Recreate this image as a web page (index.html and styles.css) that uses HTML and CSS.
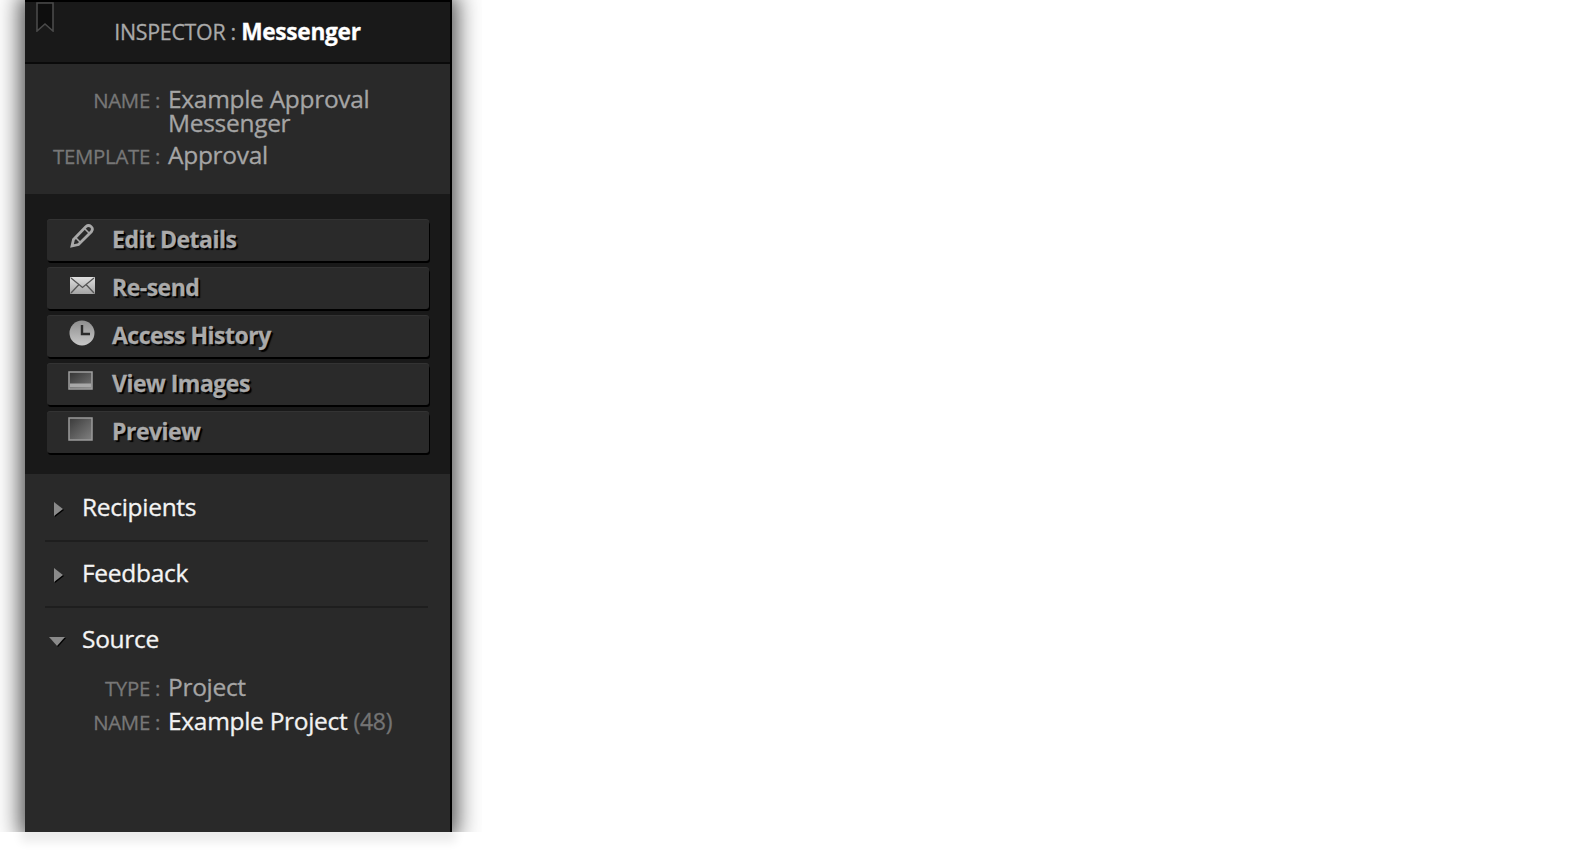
FILE: index.html
```html
<!DOCTYPE html>
<html lang="en">
<head>
<meta charset="utf-8">
<title>Inspector : Messenger</title>
<link rel="stylesheet" href="styles.css">
</head>
<body>
<div class="shell">
<aside class="panel">
  <header class="head">
    <svg class="bookmark" viewBox="0 0 18 30" width="18" height="30"><path d="M1 1H17V29L9 22L1 29Z" fill="#0e0e0e" stroke="#4a4a4a" stroke-width="1.6"/></svg>
    <span class="head-label">INSPECTOR :</span> <strong class="head-title">Messenger</strong>
  </header>
  <section class="info">
    <div class="row"><span class="key">NAME :</span><span class="val val-tight">Example Approval Messenger</span></div>
    <div class="row"><span class="key">TEMPLATE :</span><span class="val">Approval</span></div>
  </section>
  <section class="actions">
    <a class="btn"><svg class="ico ico-up" viewBox="0 0 26 26" width="26" height="26"><g fill="none" stroke="#a8a8a8"><path d="M4.500 17.500L17 4.500Q19.500 2.500 22 4.500T22.500 9.500L9.500 22.500L3 24Z" stroke-width="2.800"/><path d="M7 16L11 20M16 7L20 11" stroke-width="1.600"/></g></svg><span>Edit Details</span></a>
    <a class="btn"><svg class="ico" viewBox="0 0 26 26" width="26" height="26"><defs><linearGradient id="g0" x1="0" y1="0" x2="0" y2="1"><stop offset="0" stop-color="#e0e0e0"/><stop offset="1" stop-color="#a4a4a4"/></linearGradient></defs><rect x="1" y="5" width="25" height="17" rx="1" fill="url(#g0)"/><path d="M2 6L13.500 15.500L25 6M2 21L10 12.500M25 21L17 12.500" fill="none" stroke="#555" stroke-width="1.300"/></svg><span>Re-send</span></a>
    <a class="btn"><svg class="ico" viewBox="0 0 26 26" width="26" height="26"><defs><linearGradient id="g3" x1="0" y1="0" x2="0" y2="1"><stop offset="0" stop-color="#8e8e8e"/><stop offset="1" stop-color="#c8c8c8"/></linearGradient></defs><circle cx="13" cy="13" r="12.500" fill="url(#g3)"/><path d="M13 5V14H21" fill="none" stroke="#2a2a2a" stroke-width="2.400"/></svg><span>Access History</span></a>
    <a class="btn"><svg class="ico ico-l" viewBox="0 0 26 26" width="26" height="26"><defs><linearGradient id="g1" x1="0" y1="0" x2="1" y2="1"><stop offset="0" stop-color="#333"/><stop offset="1" stop-color="#777"/></linearGradient></defs><rect x="1" y="4" width="23" height="17" fill="url(#g1)" stroke="#a0a0a0" stroke-width="1.500"/><rect x="2" y="15.500" width="21" height="4" fill="#a8a8a8"/></svg><span>View Images</span></a>
    <a class="btn"><svg class="ico ico-l" viewBox="0 0 26 26" width="26" height="26"><defs><linearGradient id="g2" x1="0" y1="0" x2="1" y2="1"><stop offset="0" stop-color="#3a3a3a"/><stop offset="1" stop-color="#808080"/></linearGradient></defs><rect x="1" y="2" width="23" height="22" fill="url(#g2)" stroke="#9a9a9a" stroke-width="1.500"/></svg><span>Preview</span></a>
  </section>
  <section class="lists">
    <div class="item"><i class="tri"></i>Recipients</div>
    <div class="item"><i class="tri"></i>Feedback</div>
    <div class="item item-open"><i class="tri tri-down"></i>Source</div>
    <div class="source">
      <div class="row"><span class="key">TYPE :</span><span class="val">Project</span></div>
      <div class="row"><span class="key">NAME :</span><span class="val val-bright">Example Project <small class="count">(48)</small></span></div>
    </div>
  </section>
</aside>
</div>
</body>
</html>
```
FILE: styles.css
```css
html, body { margin: 0; height: 100%; background: #fff; overflow: hidden; }
body { padding-left: 25px; font-family: "Open Sans", "Liberation Sans", sans-serif; -webkit-text-stroke: .3px; }
.shell {
  width: 427px; height: 832px;
  box-shadow: 0 6px 9px 4px rgba(0,0,0,.08);
}
.panel {
  width: 425px; height: 830px;
  border-top: 2px solid #000; border-right: 2px solid #000;
  background: #292929;
  box-shadow: 0 0 22px 6px rgba(0,0,0,.62);
  clip-path: inset(0 -30px 0 -30px);
  display: flex; flex-direction: column;
  letter-spacing: -.3px;
}
.head {
  position: relative; height: 62px; box-sizing: border-box;
  background: #191919; border-bottom: 2px solid #0a0a0a;
  text-align: center; padding-top: 16px; line-height: 28px; font-size: 21.400px;
}
.bookmark { position: absolute; left: 11px; top: 0; }
.head-label { color: #a9a9a9; }
.head-title { color: #fff; font-weight: 700; font-size: 22.700px; }
.info { height: 130px; box-sizing: border-box; padding-top: 18px; }
.row { display: flex; gap: 8px; }
.key { width: 135px; height: 34px; flex: none; text-align: right; font-size: 20.400px; color: #777; line-height: 36px; }
.val { width: 240px; font-size: 24.500px; color: #a5a5a5; line-height: 34px; }
.val-tight { line-height: 24px; padding-top: 5px; padding-bottom: 3px; }
.val-bright { color: #f2f2f2; width: 260px; }
.count { font-size: 23px; color: #747474; }
.actions {
  height: 280px; box-sizing: border-box; background: #191919;
  padding: 26px 21px 0 22px; display: flex; flex-direction: column; gap: 6px;
}
.btn {
  height: 41px; margin-bottom: 1px; box-sizing: border-box; background: #2a2a2a;
  border-radius: 3px; box-shadow: 1px 2px 0 #000, 0 -1px 0 #333;
  display: flex; align-items: center; padding: 0 0 3px 22px;
  color: #aaa; font-weight: 700; font-size: 23px; letter-spacing: -.5px;
  text-shadow: 1px 1px 0 #000, 2px 2px 1px #000;
}
.btn span { margin-left: 17px; }
.ico { flex: none; margin-top: -4px; }
.ico-up { margin-top: -9px; }
.ico-l { margin-left: -1px; margin-right: 1px; }
.lists { padding: 2px 22px 0 20px; flex: 1; }
.item {
  height: 66px; box-sizing: border-box; border-bottom: 2px solid #1e1e1e;
  display: flex; align-items: center; color: #f4f4f4; font-size: 24.500px;
  position: relative; padding: 0 0 4px 37px;
}
.item-open { border: 0; height: 64px; }
.tri {
  position: absolute; left: 9px; top: 26px; width: 0; height: 0;
  border-left: 9px solid #8a8a8a; border-top: 7.500px solid transparent; border-bottom: 7.500px solid transparent;
  filter: drop-shadow(1px 1px 0 #000);
}
.tri-down {
  left: 4px; top: 29px;
  border-left: 8px solid transparent; border-right: 8px solid transparent; border-top: 9px solid #8a8a8a; border-bottom: 0;
}
.source { margin: -2px 0 0 -20px; }
```
